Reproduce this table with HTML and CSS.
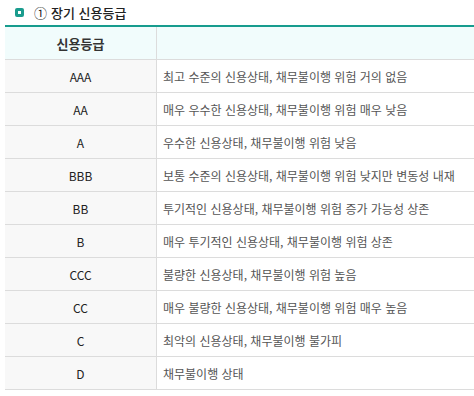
FILE: index.html
```html
<!DOCTYPE html>
<html lang="ko">
<head>
<meta charset="utf-8">
<link rel="stylesheet" href="styles.css">
</head>
<body>
<div class="wrap">
  <h3 class="title"><span class="bullet"></span><span class="num">①</span> 장기 신용등급</h3>
  <table class="grade">
    <thead>
      <tr><th class="c1">신용등급</th><th class="c2"></th></tr>
    </thead>
    <tbody>
      <tr><td class="c1">AAA</td><td class="c2">최고 수준의 신용상태, 채무불이행 위험 거의 없음</td></tr>
      <tr><td class="c1">AA</td><td class="c2">매우 우수한 신용상태, 채무불이행 위험 매우 낮음</td></tr>
      <tr><td class="c1">A</td><td class="c2">우수한 신용상태, 채무불이행 위험 낮음</td></tr>
      <tr><td class="c1">BBB</td><td class="c2">보통 수준의 신용상태, 채무불이행 위험 낮지만 변동성 내재</td></tr>
      <tr><td class="c1">BB</td><td class="c2">투기적인 신용상태, 채무불이행 위험 증가 가능성 상존</td></tr>
      <tr><td class="c1">B</td><td class="c2">매우 투기적인 신용상태, 채무불이행 위험 상존</td></tr>
      <tr><td class="c1">CCC</td><td class="c2">불량한 신용상태, 채무불이행 위험 높음</td></tr>
      <tr><td class="c1">CC</td><td class="c2">매우 불량한 신용상태, 채무불이행 위험 매우 높음</td></tr>
      <tr><td class="c1">C</td><td class="c2">최악의 신용상태, 채무불이행 불가피</td></tr>
      <tr><td class="c1">D</td><td class="c2">채무불이행 상태</td></tr>
    </tbody>
  </table>
</div>
</body>
</html>
```
FILE: styles.css
```css
html, body {
  margin: 0;
  padding: 0;
  background: #fff;
}
body {
  font-family: "Noto Sans CJK KR", "Noto Sans", sans-serif;
  color: #333;
}
.wrap {
  padding: 0 0 0 5px;
  width: 480px;
}
.title {
  display: flex;
  align-items: center;
  height: 25px;
  margin: 0;
  padding-left: 10px;
  font-size: 13px;
  font-weight: 500;
  color: #222;
  line-height: 1;
}
.bullet {
  display: inline-block;
  box-sizing: border-box;
  width: 9px;
  height: 9px;
  border: 3px solid #1a9c8e;
  border-radius: 2px;
  margin-right: 10px;
}
.num {
  font-weight: 400;
  margin-right: 4px;
}
.grade {
  border-collapse: collapse;
  width: 480px;
  table-layout: fixed;
  border-top: 2px solid #179c8e;
  font-size: 12px;
}
.grade th, .grade td {
  height: 32px;
  padding: 0;
  border-bottom: 1px solid #dcdcdc;
  box-sizing: content-box;
}
.grade th {
  background: #f1fcfc;
  font-size: 13px;
  font-weight: 700;
  color: #333;
}
.grade .c1 {
  width: 151px;
  text-align: center;
  border-right: 1px solid #dcdcdc;
}
.grade td.c1 {
  background: #f8f8f8;
  font-weight: 400;
  color: #222;
}
.grade td.c2 {
  padding-left: 6px;
  color: #555;
  white-space: nowrap;
}
```
